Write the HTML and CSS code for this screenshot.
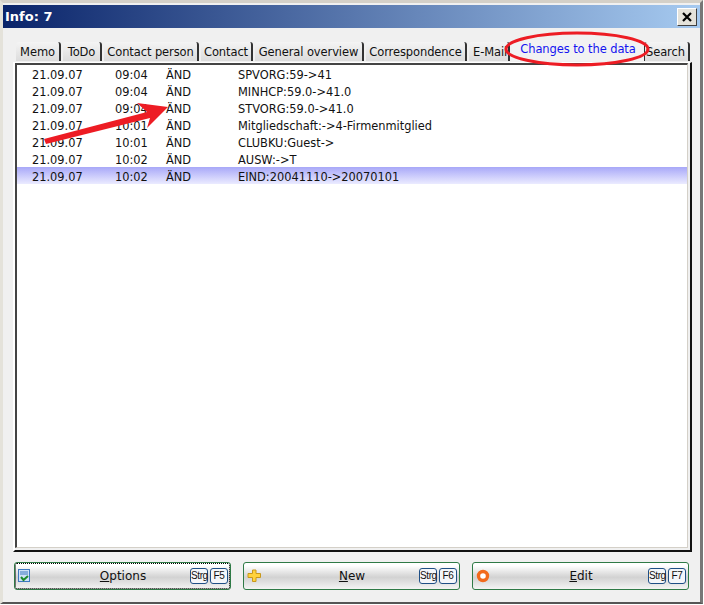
FILE: index.html
```html
<!DOCTYPE html>
<html lang="de">
<head>
<meta charset="utf-8">
<title>Info: 7</title>
<link rel="stylesheet" href="styles.css">
</head>
<body>
<div class="window">
  <div class="titlebar">
    <span class="title">Info: 7</span>
    <span class="close"><svg width="12" height="12" viewBox="0 0 12 12"><path d="M2 2 L10 10 M10 2 L2 10" stroke="#000" stroke-width="2.2" fill="none"/></svg></span>
  </div>
  <div class="content">
    <div class="tabs">
      <span class="tab t1">Memo</span>
      <span class="tab t2">ToDo</span>
      <span class="tab t3">Contact person</span>
      <span class="tab t4">Contact</span>
      <span class="tab t5">General overview</span>
      <span class="tab t6">Correspondence</span>
      <span class="tab t7">E-Mail</span>
      <span class="tab active">Changes to the data</span>
      <span class="tab t9">Search</span>
    </div>
    <div class="panel">
      <div class="list">
        <div class="row"><span class="date">21.09.07</span><span class="time">09:04</span><span class="kind">ÄND</span><span class="text">SPVORG:59-&gt;41</span></div>
        <div class="row"><span class="date">21.09.07</span><span class="time">09:04</span><span class="kind">ÄND</span><span class="text">MINHCP:59.0-&gt;41.0</span></div>
        <div class="row"><span class="date">21.09.07</span><span class="time">09:04</span><span class="kind">ÄND</span><span class="text">STVORG:59.0-&gt;41.0</span></div>
        <div class="row"><span class="date">21.09.07</span><span class="time">10:01</span><span class="kind">ÄND</span><span class="text">Mitgliedschaft:-&gt;4-Firmenmitglied</span></div>
        <div class="row"><span class="date">21.09.07</span><span class="time">10:01</span><span class="kind">ÄND</span><span class="text">CLUBKU:Guest-&gt;</span></div>
        <div class="row"><span class="date">21.09.07</span><span class="time">10:02</span><span class="kind">ÄND</span><span class="text">AUSW:-&gt;T</span></div>
        <div class="row selected"><span class="date">21.09.07</span><span class="time">10:02</span><span class="kind">ÄND</span><span class="text">EIND:20041110-&gt;20070101</span></div>
      </div>
    </div>
    <div class="buttons">
      <div class="btn focused">
        <span class="side"><svg width="13" height="14" viewBox="0 0 13 14"><rect x="0.5" y="0.5" width="11" height="12" fill="#cfe2f7" stroke="#3d78c0"/><path d="M2 3h8M2 5h8" stroke="#3d78c0"/><path d="M3 8l2.500 3L10 7" stroke="#1c8a2c" stroke-width="2" fill="none"/></svg></span>
        <span class="label"><u>O</u>ptions</span>
        <span class="side keys"><span class="key">Strg</span><span class="key">F5</span></span>
      </div>
      <div class="btn">
        <span class="side"><svg width="15" height="14" viewBox="0 0 15 14"><path d="M5.500 1h3.500v3.500h4.500v4h-4.500v4h-3.500v-4h-4.500v-4h4.500z" fill="#ffd23c" stroke="#c8981c"/></svg></span>
        <span class="label"><u>N</u>ew</span>
        <span class="side keys"><span class="key">Strg</span><span class="key">F6</span></span>
      </div>
      <div class="btn">
        <span class="side"><svg width="15" height="14" viewBox="0 0 15 14"><circle cx="7" cy="7" r="4.500" fill="#fff" stroke="#f26a1c" stroke-width="3.400"/></svg></span>
        <span class="label"><u>E</u>dit</span>
        <span class="side keys"><span class="key">Strg</span><span class="key">F7</span></span>
      </div>
    </div>
  </div>
  <svg class="annot" width="704" height="605" viewBox="0 0 704 605">
    <ellipse cx="577" cy="49" rx="71" ry="16" fill="none" stroke="#ed1c24" stroke-width="3"/>
    <path d="M44 139 L147 112 L137 103 L168 107 L147 128 L150 118 L46 144 Z" fill="#ed1c24"/>
  </svg>
</div>
</body>
</html>
```

FILE: styles.css
```css
* { box-sizing: border-box; }
html, body { margin: 0; padding: 0; background: #fff; }
body { font-family: "DejaVu Sans", sans-serif; font-size: 11.4px; color: #111; }
.window {
  position: relative;
  width: 703px;
  height: 604px;
  background: #f0f0f0;
  border: 3px solid #e4e2da;
  border-top-color: #d4d0c8;
  border-bottom-color: #555;
  border-bottom-width: 2px;
  border-right-color: #777;
  display: flex;
  flex-direction: column;
}
.titlebar {
  margin-top: 2px;
  height: 23px;
  flex: none;
  background: linear-gradient(to right, #0a246a, #a6caf0);
  display: flex;
  align-items: center;
  justify-content: space-between;
  padding: 0 3px 0 2px;
}
.title { color: #fff; font: bold 13px "DejaVu Sans", sans-serif; }
.close {
  width: 20px;
  height: 18px;
  background: #e4e2da;
  border: 1px solid;
  border-color: #fff #404040 #404040 #fff;
  display: flex;
  align-items: center;
  justify-content: center;
}
.content {
  flex: 1;
  display: flex;
  flex-direction: column;
  padding: 14px 8px 12px 10px;
}
.tabs { display: flex; height: 20px; padding-left: 3px; flex: none; }
.tab {
  margin-right: 2px;
  height: 19px;
  line-height: 20px;
  text-align: center;
  background: linear-gradient(#f4f4f4, #dcdcdc);
  border-right: 2px solid #333;
  border-top-left-radius: 3px;
  border-top-right-radius: 3px;
  white-space: nowrap;
  overflow: hidden;
  font-size: 11.5px;
  letter-spacing: -0.1px;
}
.t1 { width: 45px; }
.t2 { width: 39px; }
.t3 { width: 95px; }
.t4 { width: 52px; }
.t5 { width: 109px; }
.t6 { width: 101px; }
.t7 { width: 41px; text-align: left; padding-left: 4px; }
.active {
  width: 132px;
  height: 21px;
  margin-top: -2px;
  margin-right: 0;
  color: #1414f0;
  background: #f2f2f2;
  border-right: 0;
  line-height: 18px;
}
.t9 { width: 46px; margin-right: 0; text-align: left; padding-left: 1px; border-left: 1px solid #333; }
.panel {
  flex: 1;
  min-height: 0;
  border-style: solid;
  border-width: 1px 2px 2px 2px;
  border-color: #fff #111 #111 #fff;
  padding: 0 2px 2px 0;
  background: #f0f0f0;
}
.list {
  height: 100%;
  background: #fff;
  border-style: solid;
  border-width: 2px 1px 1px 2px;
  border-color: #444 #d4d0c8 #d4d0c8 #444;
}
.row { display: flex; height: 17px; line-height: 21px; white-space: nowrap; }
.selected { background: linear-gradient(#a8a8f8, #ebebff); }
.date { flex: none; width: 98px; padding-left: 15px; }
.time { flex: none; width: 51px; }
.kind { flex: none; width: 72px; }
.text { flex: 1; }
.buttons { display: flex; gap: 12px; height: 28px; margin: 10px 3px 0 1px; flex: none; }
.btn {
  flex: 1;
  display: grid;
  grid-template-columns: 1fr auto 1fr;
  align-items: center;
  padding: 0 2px 0 3px;
  border: 1px solid #2f7a46;
  border-radius: 3px;
  background: linear-gradient(#fff 10%, #d2d2d2 55%, #f4f4f4 100%);
  font-size: 12px;
}
.focused { outline: 1px dotted #000; outline-offset: -2px; }
.side { display: flex; align-items: center; }
.keys { justify-content: flex-end; gap: 2px; }
.label { text-align: center; }
.key {
  flex: none;
  width: 18px;
  height: 16px;
  border: 1px solid #1f4f86;
  border-radius: 3px;
  background: #f4f6fa;
  font-family: "Liberation Sans", sans-serif;
  font-size: 10px;
  letter-spacing: -0.4px;
  line-height: 14px;
  text-align: center;
}
.annot { position: absolute; left: -3px; top: -3px; pointer-events: none; }
```
